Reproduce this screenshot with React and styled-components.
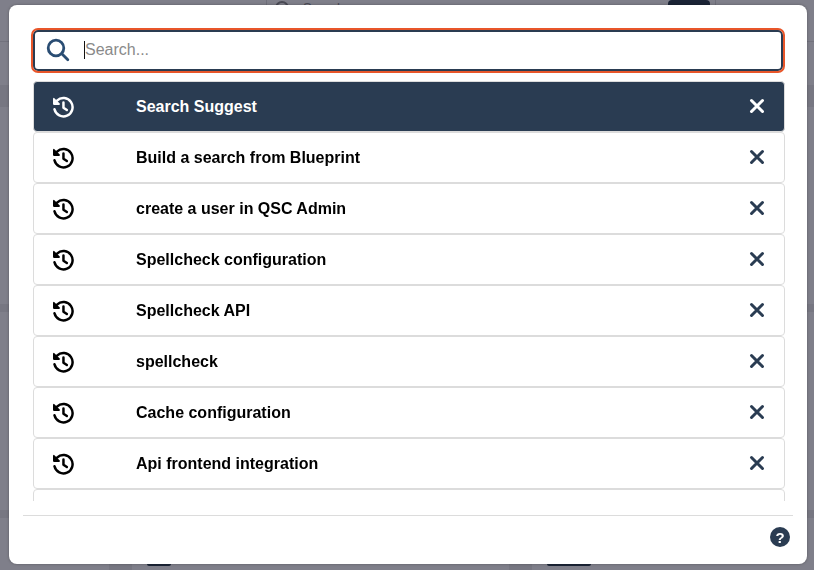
import React from 'react';
import styled, {createGlobalStyle} from 'styled-components';

const GlobalStyle = createGlobalStyle`
  html, body {
    margin: 0;
    padding: 0;
    height: 100%;
    overflow: hidden;
    background: #7f7f8a;
    font-family: "Liberation Sans", Arial, sans-serif;
  }
`

/* the page that sits dimmed behind the dialog */
const Page = styled.div`
  display: flex;
  flex-direction: column;
  height: 570px;
  background: #7f7f8a;
`

const TopBar = styled.div`
  display: flex;
  align-items: flex-start;
  height: 42px;
  flex-shrink: 0;
  box-sizing: border-box;
  border-bottom: 1px solid #72727d;
`

const TopSearch = styled.div`
  display: flex;
  gap: 14px;
  width: 448px;
  height: 100%;
  margin-left: 266px;
  padding: 1px 0 0 8px;
  box-sizing: border-box;
  border-left: 1px solid #6f6f7a;
  font-size: 13px;
  line-height: 14px;
  color: #4a4a55;
`

const TopGlass = styled.span`
  width: 10px;
  height: 10px;
  border: 2px solid #4a4a55;
  border-radius: 50%;
  flex-shrink: 0;
`

const TopButton = styled.span`
  width: 42px;
  height: 5px;
  margin-left: -46px;
  border-radius: 4px 4px 0 0;
  background: #1b2436;
`

const TopEdge = styled.span`
  width: 1px;
  height: 100%;
  margin-left: 5px;
  background: #6f6f7a;
`

const Band = styled.div`
  height: ${props => props.$height}px;
  margin-top: ${props => props.$top}px;
  flex-shrink: 0;
  background: #777782;
`

const BottomRow = styled.div`
  display: flex;
  flex: 1;
  align-items: flex-end;
`

const BottomCell = styled.div`
  display: flex;
  align-items: flex-start;
  width: ${props => props.$width}px;
  height: 6px;
  flex-shrink: 0;
`

const BottomGap = styled.span`
  width: 23px;
  height: 100%;
  background: #777782;
  margin-left: 109px;
`

const BottomGapNext = styled(BottomGap)`
  margin-left: 0;
`

const BottomButton = styled.span`
  width: ${props => props.$width}px;
  height: 2px;
  margin-left: 15px;
  border-radius: 0 0 4px 4px;
  background: #1b2436;
`

const Overlay = styled.div`
  position: fixed;
  inset: 0;
  padding: 5px 7px 6px 9px;
  box-sizing: border-box;
`

const Modal = styled.div`
  display: flex;
  flex-direction: column;
  height: 100%;
  box-sizing: border-box;
  background: #fff;
  border-radius: 8px;
  box-shadow: 0 0 3px rgba(0, 0, 0, 0.3);
  padding: 25px 14px 0 14px;
`

const SearchBar = styled.div`
  display: flex;
  align-items: center;
  height: 41px;
  margin: 0 10px 0 10px;
  box-sizing: border-box;
  background: #fff;
  border: 2px solid #2a3c52;
  border-radius: 5px;
  outline: 2px solid #e8562a;
  padding: 0 14px 2px 11px;
`

const SearchIcon = styled.svg`
  width: 24px;
  height: 24px;
  flex-shrink: 0;
  margin-right: 14px;
`

const SearchInput = styled.input`
  flex: 1;
  border: 0;
  outline: 0;
  padding: 0;
  background: transparent;
  font-family: inherit;
  font-size: 16px;
  color: #111;

  &::placeholder {
    color: #8a8a8a;
    opacity: 1;
  }
`

const Caret = styled.span`
  width: 1px;
  height: 18px;
  background: #111;
  flex-shrink: 0;
`

const List = styled.ul`
  list-style: none;
  margin: 10px 8px 0 10px;
  padding: 0;
  height: 420px;
  overflow: hidden;
`

const Row = styled.li`
  display: flex;
  align-items: center;
  height: 51px;
  box-sizing: border-box;
  padding: 0 17px 0 18px;
  border: 1px solid #dcdcdc;
  border-radius: 4px;
  background: ${props => (props.$active ? '#2a3c52' : '#fff')};
  color: ${props => (props.$active ? '#fff' : '#000')};
`

const HistoryIcon = styled.svg`
  width: 22px;
  height: 22px;
  flex-shrink: 0;
  margin-right: 62px;
`

const RowLabel = styled.span`
  flex: 1;
  font-size: 16px;
  font-weight: 700;
`

const CloseIcon = styled.svg`
  width: 20px;
  height: 20px;
  flex-shrink: 0;
  margin-top: -1px;
  color: ${props => (props.$active ? '#fff' : '#2a3c52')};
`

const Footer = styled.div`
  display: flex;
  justify-content: flex-end;
  align-items: center;
  flex: 1;
  margin-top: 14px;
  border-top: 1px solid #dcdcdc;
  padding: 0 3px 6px 0;
`

const HelpButton = styled.span`
  display: flex;
  align-items: center;
  justify-content: center;
  width: 20px;
  height: 20px;
  border-radius: 50%;
  background: #2a3c52;
  color: #fff;
  font-size: 15px;
  font-weight: 700;
`

const items = [
  'Search Suggest',
  'Build a search from Blueprint',
  'create a user in QSC Admin',
  'Spellcheck configuration',
  'Spellcheck API',
  'spellcheck',
  'Cache configuration',
  'Api frontend integration',
  '',
];

export default function App() {
  return (
    <>
      <GlobalStyle />
      <Page>
        <TopBar>
          <TopSearch>
            <TopGlass />
            Search
          </TopSearch>
          <TopButton />
          <TopEdge />
        </TopBar>
        <Band $top={43} $height={22} />
        <Band $top={197} $height={8} />
        <Band $top={198} $height={8} />
        <BottomRow>
          <BottomCell $width={509}>
            <BottomGap />
            <BottomButton $width={24} />
          </BottomCell>
          <BottomCell $width={300}>
            <BottomGapNext />
            <BottomButton $width={44} />
          </BottomCell>
        </BottomRow>
      </Page>
      <Overlay>
        <Modal>
          <SearchBar>
            <SearchIcon viewBox="0 0 24 24" fill="none" stroke="#2a4d73" strokeWidth="2.800" strokeLinecap="round">
              <circle cx="10" cy="10" r="7.800" />
              <path d="M15.800 15.800l6 6" />
            </SearchIcon>
            <Caret />
            <SearchInput placeholder="Search..." />
          </SearchBar>
          <List>
            {items.map((item, i) => (
              <Row key={i} $active={i === 0}>
                <HistoryIcon viewBox="0 0 24 24" fill="none" stroke="currentColor" strokeWidth="2.700" strokeLinecap="round" strokeLinejoin="round">
                  <path d="M5.500 5a10 10 0 1 1-2.800 9.500" />
                  <path d="M2 3v5.800h5.800z" fill="currentColor" strokeWidth="1.800" />
                  <path d="M12.500 7v5.700l3.700 2.600" />
                </HistoryIcon>
                <RowLabel>{item}</RowLabel>
                <CloseIcon $active={i === 0} viewBox="0 0 20 20" fill="none" stroke="currentColor" strokeWidth="3" strokeLinecap="round">
                  <path d="M4.500 4.500l11 11M15.500 4.500l-11 11" />
                </CloseIcon>
              </Row>
            ))}
          </List>
          <Footer>
            <HelpButton>?</HelpButton>
          </Footer>
        </Modal>
      </Overlay>
    </>
  );
};
